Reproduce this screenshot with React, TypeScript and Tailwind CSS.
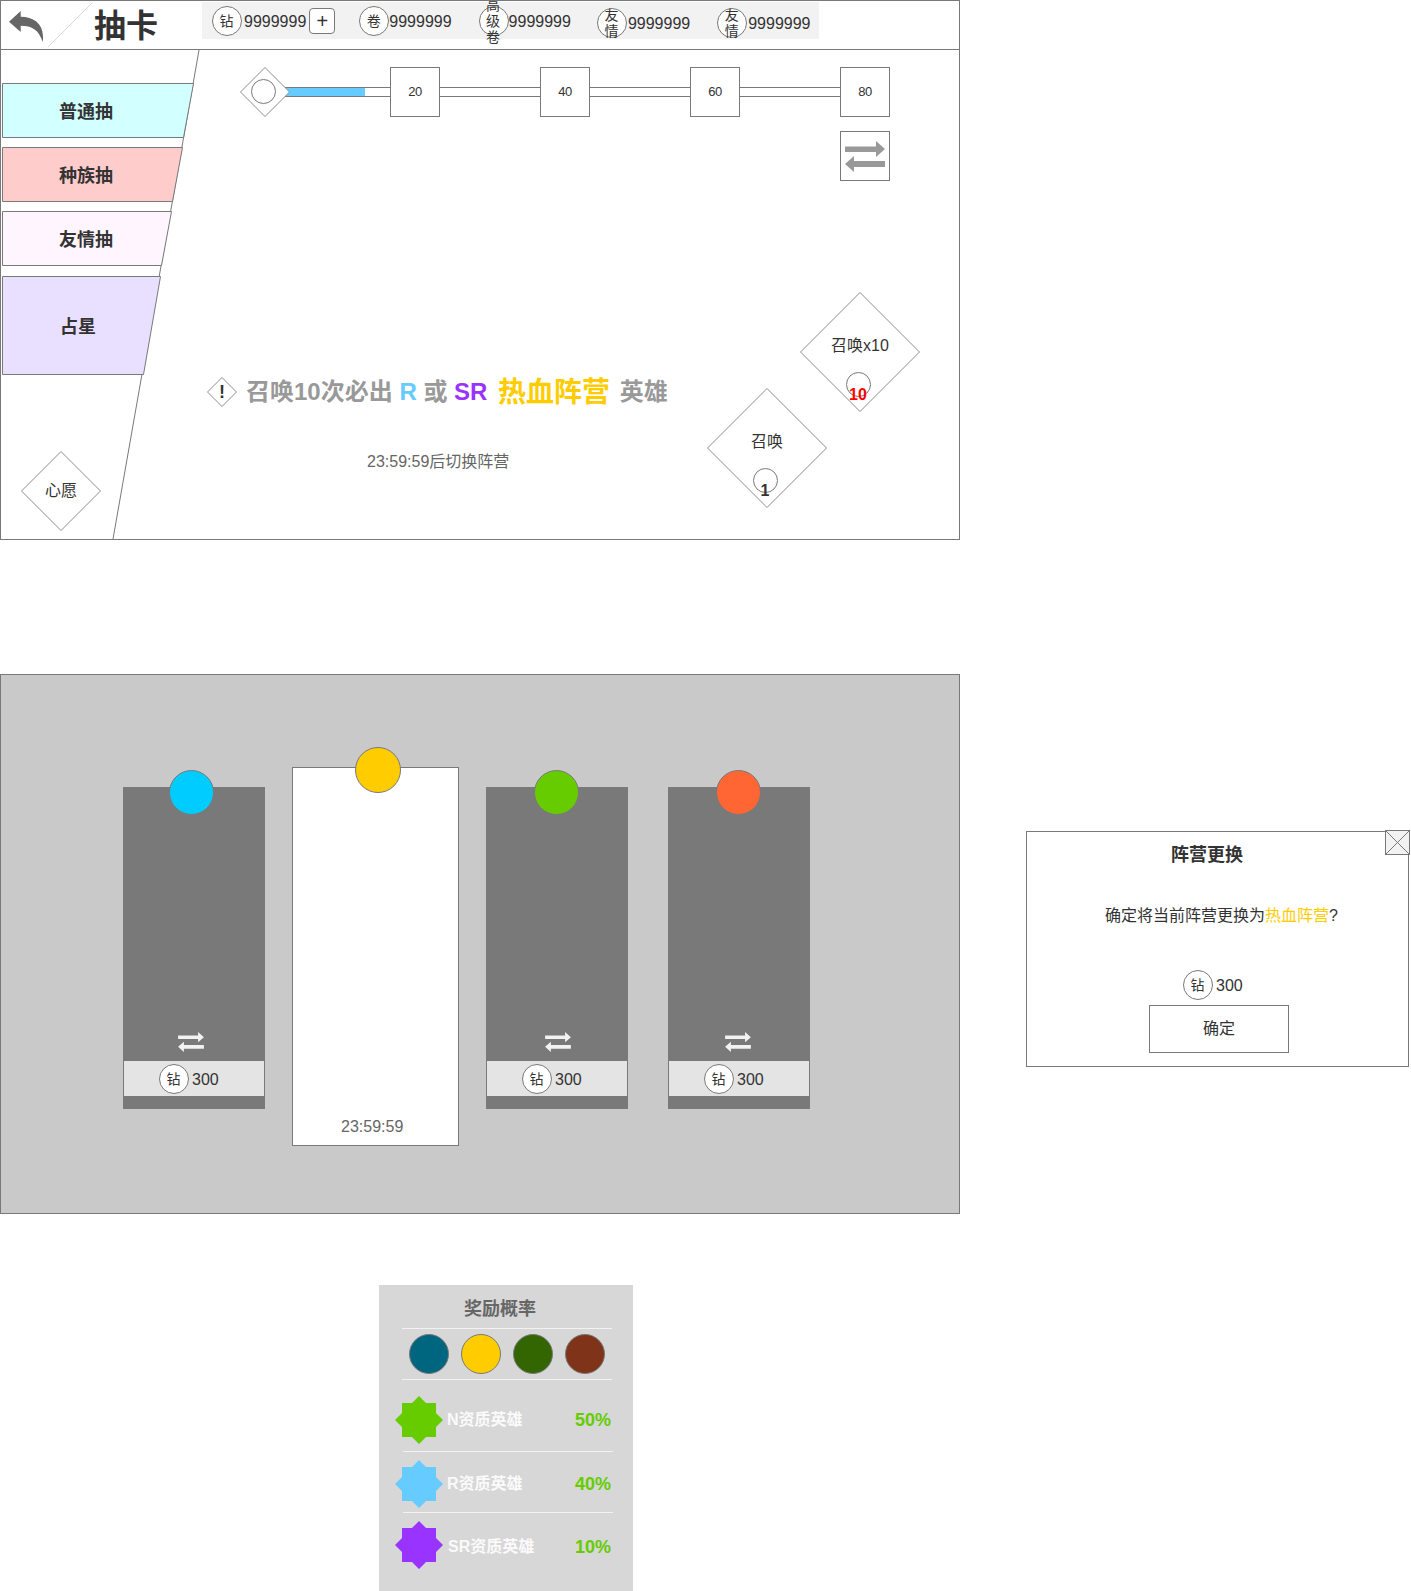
import type { ReactNode } from "react";

const tabs = [
  { label: "普通抽", size: "w-[192px] h-[55px]", w: 192, h: 55, slant: 10, fill: "#d2ffff", text: "pl-[57px] pt-[2px]", gap: "mt-[33px]" },
  { label: "种族抽", size: "w-[181px] h-[55px]", w: 181, h: 55, slant: 10, fill: "#ffcccc", text: "pl-[57px] pt-[2px]", gap: "mt-[9px]" },
  { label: "友情抽", size: "w-[170px] h-[55px]", w: 170, h: 55, slant: 10, fill: "#fff5ff", text: "pl-[57px] pt-[2px]", gap: "mt-[9px]" },
  { label: "占星", size: "w-[159px] h-[99px]", w: 159, h: 99, slant: 17, fill: "#e9dfff", text: "pl-[58px] pt-[2px]", gap: "mt-[10px]" },
];

const currencies = [
  { label: "卷", circle: "ml-[24px]", text: "ml-0", top: "" },
  { label: "高级卷", circle: "ml-[27px]", text: "ml-0", top: "" },
  { label: "友情", circle: "ml-[26px]", text: "ml-[1px]", top: "mt-[2px]" },
  { label: "友情", circle: "ml-[27px]", text: "ml-[1px]", top: "mt-[2px]" },
];

const factions = [
  { dot: "bg-[#00ccff]", dotPos: "left-[46px]", arrow: "ml-[55px]", margin: "ml-[122px]" },
  { selected: true },
  { dot: "bg-[#66cc00]", dotPos: "left-[48px]", arrow: "ml-[59px]", margin: "ml-[27px]" },
  { dot: "bg-[#ff6633]", dotPos: "left-[48px]", arrow: "ml-[57px]", margin: "ml-[40px]" },
];

const rewards = [
  { name: "N资质英雄", rate: "50%", fill: "#66cc00", gap: "mt-[16px]", text: "ml-[4px]", drop: "" },
  { name: "R资质英雄", rate: "40%", fill: "#66ccff", gap: "mt-[8px]", text: "ml-[4px]", drop: "" },
  { name: "SR资质英雄", rate: "10%", fill: "#9933ff", gap: "mt-[8px]", text: "ml-[5px]", drop: "pt-[4px]" },
];

function Coin({ label, className = "" }: { label: string; className?: string }) {
  return (
    <div
      className={`flex h-[30px] w-[30px] shrink-0 items-center justify-center overflow-visible rounded-full border border-[#797979] bg-white pr-[1px] text-center text-[14px] leading-[16px] text-[#333] ${className}`}
    >
      {label}
    </div>
  );
}

function Diamond({ size, className = "", children }: { size: number; className?: string; children?: ReactNode }) {
  const m = size / 2;
  return (
    <div className={`relative shrink-0 ${className}`}>
      <svg className="absolute inset-0" width={size} height={size}>
        <polygon
          points={`${m},0.5 ${size - 0.5},${m} ${m},${size - 0.5} 0.5,${m}`}
          fill="#fff"
          stroke="#8c8c8c"
        />
      </svg>
      {children}
    </div>
  );
}

function SwapIcon({ className = "", color }: { className?: string; color: string }) {
  return (
    <svg className={className} viewBox="0 0 40 31" fill={color}>
      <path d="M0 5.5H31V0L40 8L31 16V11H0Z" />
      <path d="M40 20V26H9V31L0 23L9 15V20Z" />
    </svg>
  );
}

function Star({ fill }: { fill: string }) {
  return (
    <svg className="h-[48px] w-[48px] shrink-0" viewBox="0 0 48 48" fill={fill}>
      <polygon points="24,0 31,7 41,7 41,17 48,24 41,31 41,41 31,41 24,48 17,41 7,41 7,31 0,24 7,17 7,7 17,7" />
    </svg>
  );
}

function Milestone({ value }: { value: number }) {
  return (
    <div className="flex h-[50px] w-[50px] shrink-0 items-center justify-center border border-[#797979] bg-white text-[13px] tracking-[-0.4px] text-[#333]">
      {value}
    </div>
  );
}

function SummonButton({ label, count, className, countColor }: { label: string; count: string; className: string; countColor: string }) {
  return (
    <div className={`absolute ${className}`}>
      <Diamond size={120} className="h-[120px] w-[120px]">
        <div className="absolute left-0 top-[42px] w-full text-center text-[16px] leading-[24px] text-[#333]">{label}</div>
        <div className="absolute left-[46px] top-[80px] h-[25px] w-[25px] rounded-full border border-[#797979] bg-white" />
        <div className={`absolute left-0 top-[92px] w-[116px] text-center text-[16px] font-bold leading-[22px] ${countColor}`}>{count}</div>
      </Diamond>
    </div>
  );
}

function DrawPanel() {
  return (
    <section className="h-[540px] w-[960px] border border-[#797979] bg-white">
      <header className="flex h-[49px] items-start border-b border-[#797979]">
        <svg className="ml-[8px] mt-[10px] h-[31px] w-[34px] shrink-0" viewBox="0 0 34 31" fill="#666">
          <path d="M0 10.7L11.7 0V5.7C26 5.7 36 14 33.7 31C30 19 23 14.7 11.7 14.7V21Z" />
        </svg>
        <svg className="ml-[5px] mt-[2px] h-[44px] w-[44px] shrink-0" viewBox="0 0 44 44">
          <line x1="0" y1="44" x2="44" y2="0" stroke="#d7d7d7" />
        </svg>
        <h1 className="ml-[2px] mt-[1px] w-[64px] shrink-0 text-[32px] font-bold leading-[48px] text-[#333]">抽卡</h1>
        <div className="ml-[44px] mt-[1px] flex h-[37px] w-[617px] items-start bg-[#f2f2f2] pl-[10px] pt-[4px] text-[16px] leading-[32px] text-[#333]">
          <Coin label="钻" />
          <span className="ml-[2px]">9999999</span>
          <div className="ml-[3px] mt-[2px] flex h-[26px] w-[26px] items-center justify-center rounded-[4px] border border-[#797979] bg-white text-[20px] leading-none">
            +
          </div>
          {currencies.map((c, i) => (
            <div key={i} className={`flex items-start ${c.top}`}>
              <Coin label={c.label} className={c.circle} />
              <span className={c.text}>9999999</span>
            </div>
          ))}
        </div>
      </header>

      <div className="relative flex h-[489px]">
        {/* slanted sidebar edge */}
        <svg className="absolute left-0 top-0" width="200" height="489">
          <line x1="198" y1="0" x2="112" y2="489" stroke="#797979" />
        </svg>

        <aside className="relative flex w-[200px] shrink-0 flex-col pl-[1px]">
          {tabs.map((tab) => (
            <div key={tab.label} className={`relative flex items-center ${tab.size} ${tab.gap} ${tab.text}`}>
              <svg className="absolute inset-0" width={tab.w} height={tab.h}>
                <polygon
                  points={`0.5,0.5 ${tab.w - 0.5},0.5 ${tab.w - 0.5 - tab.slant},${tab.h - 0.5} 0.5,${tab.h - 0.5}`}
                  fill={tab.fill}
                  stroke="#797979"
                />
              </svg>
              <span className="relative text-[18px] font-bold leading-[24px] text-[#333]">{tab.label}</span>
            </div>
          ))}
          <Diamond size={80} className="ml-[19px] mt-[76px] flex h-[80px] w-[80px] items-center justify-center">
            <span className="relative text-[16px] text-[#333]">心愿</span>
          </Diamond>
        </aside>

        <div className="relative flex min-w-0 flex-1 flex-col">
          <div className="ml-[39px] mt-[17px] flex items-center">
            <Diamond size={50} className="z-10 -mr-[5px] h-[50px] w-[50px]">
              <div className="absolute left-[11px] top-[12px] h-[25px] w-[25px] rounded-full border border-[#797979]" />
            </Diamond>
            <div className="h-[10px] w-[105px] shrink-0 border-y border-[#797979]">
              <div className="h-full w-[80px] bg-[#66ccff]" />
            </div>
            <Milestone value={20} />
            <div className="h-[10px] w-[100px] shrink-0 border-y border-[#797979]" />
            <Milestone value={40} />
            <div className="h-[10px] w-[100px] shrink-0 border-y border-[#797979]" />
            <Milestone value={60} />
            <div className="h-[10px] w-[100px] shrink-0 border-y border-[#797979]" />
            <Milestone value={80} />
          </div>

          <div className="ml-[639px] mt-[14px] flex h-[50px] w-[50px] items-center justify-center border border-[#797979]">
            <SwapIcon color="#999" className="h-[31px] w-[40px]" />
          </div>

          <div className="ml-[6px] mt-[195px] flex h-[32px] items-center whitespace-pre font-bold">
            <Diamond size={30} className="mr-[9px] flex h-[30px] w-[30px] items-center justify-center">
              <span className="relative text-[18px] font-bold leading-none text-[#333]">!</span>
            </Diamond>
            <p className="text-[24px] leading-[32px] text-[#999]">
              召唤10次必出 <span className="text-[#66ccff]">R</span> 或 <span className="text-[#9933ff]">SR</span>{" "}
              <span className="ml-[4px] mr-[3px] align-[-2px] text-[28px] leading-none text-[#ffcc00]">热血阵营</span> 英雄
            </p>
          </div>

          <p className="ml-[166px] mt-[42px] text-[16px] leading-[24px] text-[#666]">23:59:59后切换阵营</p>
        </div>

        <SummonButton label="召唤x10" count="10" countColor="text-[#ff0000]" className="left-[799px] top-[242px]" />
        <SummonButton label="召唤" count="1" countColor="text-[#333]" className="left-[706px] top-[338px]" />
      </div>
    </section>
  );
}

function FactionPanel() {
  return (
    <section className="flex h-[540px] w-[960px] shrink-0 items-start border border-[#797979] bg-[#c9c9c9] pt-[92px]">
      {factions.map((f, i) =>
        f.selected ? (
          <div
            key={i}
            className="relative ml-[27px] flex h-[379px] w-[167px] shrink-0 flex-col justify-end border border-[#797979] bg-white pb-[6px] pl-[48px] text-[16px] leading-[24px] text-[#666]"
          >
            <div className="absolute -top-[21px] left-[62px] h-[46px] w-[46px] rounded-full border border-[#797979] bg-[#ffcc00]" />
            23:59:59
          </div>
        ) : (
          <div key={i} className={`relative mt-[20px] flex h-[322px] w-[142px] shrink-0 flex-col justify-end bg-[#797979] pb-[13px] ${f.margin}`}>
            <div className={`absolute -top-[17px] h-[45px] w-[45px] rounded-full border border-[#797979] ${f.dot} ${f.dotPos}`} />
            <SwapIcon color="#f2f2f2" className={`mb-[9px] h-[20px] w-[26px] ${f.arrow}`} />
            <div className="mx-[1px] flex h-[35px] items-center bg-[#e4e4e4] pl-[35px] text-[16px] text-[#333]">
              <Coin label="钻" />
              <span className="ml-[3px] mt-[2px]">300</span>
            </div>
          </div>
        ),
      )}
    </section>
  );
}

function ConfirmDialog() {
  return (
    <section className="relative ml-[66px] mt-[157px] h-[236px] w-[383px] shrink-0 border border-[#797979] bg-white text-[#333]">
      <svg className="absolute -right-[2px] -top-[2px]" width="25" height="25">
        <rect x="0.5" y="0.5" width="24" height="24" fill="#f2f2f2" stroke="#797979" />
        <path d="M0.5 0.5L24.5 24.5M24.5 0.5L0.5 24.5" stroke="#797979" />
      </svg>
      <h2 className="ml-[144px] mt-[10px] text-[18px] font-bold leading-[27px]">阵营更换</h2>
      <p className="ml-[78px] mt-[35px] text-[16px] leading-[24px]">
        确定将当前阵营更换为<span className="text-[#ffcc00]">热血阵营</span>?
      </p>
      <div className="ml-[156px] mt-[42px] flex items-center text-[16px]">
        <Coin label="钻" />
        <span className="ml-[3px] mt-[2px]">300</span>
      </div>
      <div className="ml-[122px] mt-[5px] flex h-[48px] w-[140px] items-center justify-center border border-[#797979] text-[16px]">确定</div>
    </section>
  );
}

function RatePanel() {
  return (
    <section className="ml-[379px] mt-[71px] h-[307px] w-[254px] overflow-hidden bg-[#d7d7d7] pt-[11px]">
      <h2 className="ml-[85px] text-[18px] font-bold leading-[27px] text-[#666]">奖励概率</h2>
      <div className="ml-[23px] mt-[5px] h-px w-[210px] bg-[#f2f2f2]" />
      <div className="ml-[30px] mt-[5px] flex gap-[12px]">
        <div className="h-[40px] w-[40px] rounded-full border border-[#797979] bg-[#006680]" />
        <div className="h-[40px] w-[40px] rounded-full border border-[#797979] bg-[#ffcc00]" />
        <div className="h-[40px] w-[40px] rounded-full border border-[#797979] bg-[#336600]" />
        <div className="h-[40px] w-[40px] rounded-full border border-[#797979] bg-[#7f3319]" />
      </div>
      <div className="ml-[23px] mt-[5px] h-px w-[210px] bg-[#f2f2f2]" />
      {rewards.map((r, i) => (
        <div key={r.name}>
          <div className={`ml-[16px] flex w-[216px] items-center ${r.gap}`}>
            <Star fill={r.fill} />
            <span className={`text-[16px] font-bold text-[#fafafa] ${r.text} ${r.drop}`}>{r.name}</span>
            <span className={`ml-auto text-[18px] font-bold text-[#66cc00] ${r.drop}`}>{r.rate}</span>
          </div>
          {i < 2 && <div className={`ml-[24px] h-px w-[210px] bg-[#f2f2f2] ${i === 0 ? "mt-[7px]" : "mt-[4px]"}`} />}
        </div>
      ))}
    </section>
  );
}

export default function App() {
  return (
    <div className="h-[1591px] w-[1411px] overflow-hidden bg-white font-['Liberation_Sans','Noto_Sans_CJK_SC',sans-serif]">
      <DrawPanel />
      <div className="mt-[134px] flex items-start">
        <FactionPanel />
        <ConfirmDialog />
      </div>
      <RatePanel />
    </div>
  );
}
